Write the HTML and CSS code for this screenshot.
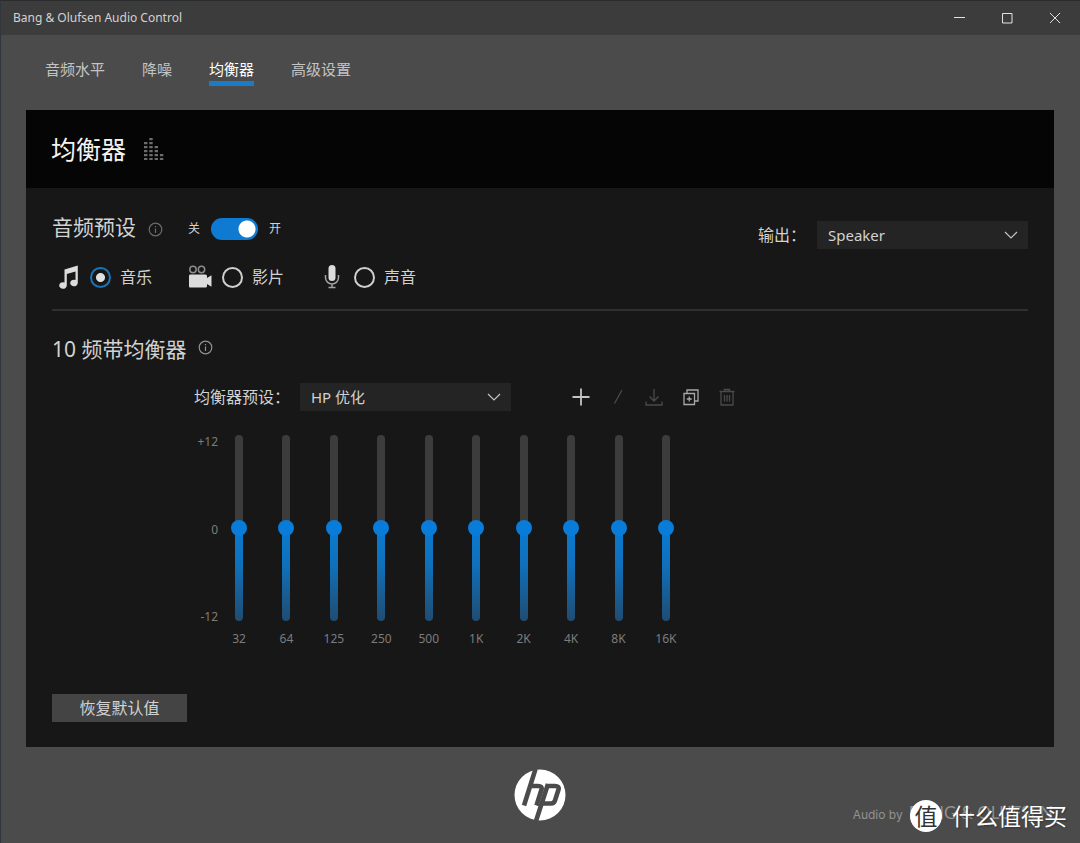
FILE: index.html
```html
<!DOCTYPE html>
<html lang="zh-CN">
<head>
<meta charset="utf-8">
<meta name="viewport" content="width=device-width, initial-scale=1">
<title>Bang &amp; Olufsen Audio Control</title>
<link rel="stylesheet" href="styles.css">
</head>
<body>
<div class="window">
  <header class="titlebar">
    <span class="titlebar-name">Bang &amp; Olufsen Audio Control</span>
    <div class="window-buttons">
      <button class="window-button" type="button" aria-label="最小化"><svg width="12" height="12" viewBox="0 0 12 12"><path d="M1 5.500h11"/></svg></button>
      <button class="window-button" type="button" aria-label="最大化"><svg width="12" height="12" viewBox="0 0 12 12"><path d="M1.500 1.500h9.500v9.500h-9.500z"/></svg></button>
      <button class="window-button" type="button" aria-label="关闭"><svg width="12" height="12" viewBox="0 0 12 12"><path d="M1 1l10 10M11 1L1 11"/></svg></button>
    </div>
  </header>

  <nav class="tabs">
    <a class="tab" href="#levels">音频水平</a>
    <a class="tab" href="#noise">降噪</a>
    <a class="tab tab-active" href="#equalizer" aria-current="page">均衡器</a>
    <a class="tab" href="#advanced">高级设置</a>
  </nav>

  <main class="panel" id="equalizer">
    <div class="panel-head">
      <h1 class="panel-title">均衡器</h1>
      <svg class="bars-icon" width="20" height="22" viewBox="0 0 20 22">
        <path d="M1.700 4V22M7 0V22M12.300 8V22M17.600 16V22" stroke-width="3.400" stroke-dasharray="2.200 1.800" fill="none" stroke="#6c6c6c"/>
      </svg>
    </div>

    <div class="panel-body">
      <section class="presets">
        <div class="preset-main">
          <div class="preset-head">
            <h2 class="section-title preset-title">音频预设</h2>
            <svg class="info-icon" width="15" height="15" viewBox="0 0 15 15"><circle cx="7.500" cy="7.500" r="6.300"/><path d="M7.500 6.500v4.500M7.500 4v1.300"/></svg>
            <label class="switch">
              <span>关</span>
              <input class="switch-input" type="checkbox" role="switch" aria-label="音频预设" checked>
              <span>开</span>
            </label>
          </div>
          <div class="radio-row" role="radiogroup" aria-label="音频预设">
            <label class="radio-item">
              <svg class="mode-icon" width="24" height="24" viewBox="0 0 24 24"><path d="M8.500 4.500L21.800 0.500v17.500a3.800 3.300 0 1 1-2.300-3V6.500L10.800 9v11.500a3.800 3.300 0 1 1-2.300-3z" fill="#dcdcdc"/></svg>
              <input class="radio" type="radio" name="preset" checked>
              <span>音乐</span>
            </label>
            <label class="radio-item">
              <svg class="mode-icon" width="24" height="24" viewBox="0 0 24 24"><g fill="none" stroke="#8c8c8c" stroke-width="1.500"><circle cx="5" cy="4.500" r="3.200"/><circle cx="13.500" cy="4.500" r="3.200"/></g><path d="M2 9.500h15.500q1.500 0 1.500 1.500v2l4-2.500h.5v11h-.5l-4-2.500v2q0 1.500-1.500 1.500H2q-1 0-1-1.500V11q0-1.500 1-1.500z" fill="#dcdcdc"/></svg>
              <input class="radio" type="radio" name="preset">
              <span>影片</span>
            </label>
            <label class="radio-item">
              <svg class="mode-icon" width="24" height="24" viewBox="0 0 24 24"><rect x="8.500" y="0" width="7" height="16" rx="3.500" fill="#dcdcdc"/><path d="M5.500 10v2.500a6.500 6.500 0 0 0 13 0V10M12 19v3.500M8.500 22.500h7" fill="none" stroke="#a2a2a2" stroke-width="1.500"/></svg>
              <input class="radio" type="radio" name="preset">
              <span>声音</span>
            </label>
          </div>
        </div>
        <div class="output">
          <label for="output-device">输出：</label>
          <span class="select-box">
            <select class="select" id="output-device"><option>Speaker</option></select>
            <svg class="chevron" width="14" height="8" viewBox="0 0 14 8"><path d="M1 1l6 6 6-6"/></svg>
          </span>
        </div>
      </section>

      <section class="bands">
        <div class="bands-head">
          <h2 class="section-title bands-title">10 频带均衡器</h2>
          <svg class="info-icon info-bright" width="15" height="15" viewBox="0 0 15 15"><circle cx="7.500" cy="7.500" r="6.300"/><path d="M7.500 6.500v4.500M7.500 4v1.300"/></svg>
        </div>
        <div class="equalizer">
          <div class="eq-toolbar">
            <label class="eq-label" for="eq-preset">均衡器预设：</label>
            <span class="select-box">
              <select class="select" id="eq-preset"><option>HP 优化</option></select>
              <svg class="chevron" width="14" height="8" viewBox="0 0 14 8"><path d="M1 1l6 6 6-6"/></svg>
            </span>
            <div class="tools">
              <button class="tool tool-add" type="button" aria-label="新建"><svg width="20" height="20" viewBox="0 0 20 20"><path d="M10 1.500v17M1.500 10h17"/></svg></button>
              <button class="tool tool-off" type="button" aria-label="编辑" disabled><svg width="20" height="20" viewBox="0 0 20 20"><path d="M6.500 16.500L14 3"/></svg></button>
              <button class="tool tool-off" type="button" aria-label="保存" disabled><svg width="20" height="20" viewBox="0 0 20 20"><path d="M10 2v12M5.500 9.500L10 14l4.500-4.500M2 14.500v3.500h16v-3.500"/></svg></button>
              <button class="tool" type="button" aria-label="复制"><svg width="20" height="20" viewBox="0 0 20 20"><path d="M3 6.500h10.500v11H3zM6 6.500V3h11v11h-3.500M8.250 9.500v5M5.750 12h5"/></svg></button>
              <button class="tool tool-off" type="button" aria-label="删除" disabled><svg width="20" height="20" viewBox="0 0 20 20"><path d="M2.500 4.500h15M7.500 4.500V2.500h5v2M4 4.500v13.500h12V4.500M7.500 8v6.500M10 8v6.500M12.500 8v6.500"/></svg></button>
            </div>
          </div>
          <div class="eq-grid">
            <div class="scale"><span>+12</span><span>0</span><span>-12</span></div>
            <div class="sliders">
              <label class="band"><input class="slider" type="range" min="-12" max="12" value="0"><span>32</span></label>
              <label class="band"><input class="slider" type="range" min="-12" max="12" value="0"><span>64</span></label>
              <label class="band"><input class="slider" type="range" min="-12" max="12" value="0"><span>125</span></label>
              <label class="band"><input class="slider" type="range" min="-12" max="12" value="0"><span>250</span></label>
              <label class="band"><input class="slider" type="range" min="-12" max="12" value="0"><span>500</span></label>
              <label class="band"><input class="slider" type="range" min="-12" max="12" value="0"><span>1K</span></label>
              <label class="band"><input class="slider" type="range" min="-12" max="12" value="0"><span>2K</span></label>
              <label class="band"><input class="slider" type="range" min="-12" max="12" value="0"><span>4K</span></label>
              <label class="band"><input class="slider" type="range" min="-12" max="12" value="0"><span>8K</span></label>
              <label class="band"><input class="slider" type="range" min="-12" max="12" value="0"><span>16K</span></label>
            </div>
          </div>
        </div>
      </section>

      <button class="reset" type="button">恢复默认值</button>
    </div>
  </main>

  <footer class="footer">
    <svg class="hp-logo" width="52" height="52" viewBox="0 0 52 52" role="img" aria-label="HP">
      <circle cx="26" cy="26" r="25.500" fill="#fff"/>
      <g fill="none" stroke="#4b4b4b" stroke-width="4.600">
        <path d="M21.500 0L10 36.500M16 17h8q4.500 0 3.500 3.500L22.500 36.500"/>
        <path d="M34 15L22 52M32 17h9q4.500 0 3.500 3.500L41 31.500q-1 3-4 3H27"/>
      </g>
    </svg>
    <div class="brand">
      <span class="brand-by">Audio by</span>
      <span class="brand-name">BANG &amp; OLUFSEN</span>
      <div class="watermark"><span class="watermark-badge">值</span><span>什么值得买</span></div>
    </div>
  </footer>
</div>
</body>
</html>
```

FILE: styles.css
```css
* {
  box-sizing: border-box;
}

body {
  margin: 0;
  background: #4b4b4b;
  color: #d2d2d2;
  font-family: "Noto Sans", "Noto Sans CJK SC", sans-serif;
  font-size: 16px;
  font-weight: 400;
  line-height: 24px;
}

button,
select,
input {
  margin: 0;
  font: inherit;
  color: inherit;
}

svg {
  display: block;
  flex: none;
}

.window {
  display: flex;
  flex-direction: column;
  min-height: 100vh;
  border-top: 1px solid #292b2d;
  border-left: 1px solid #30363c;
}

/* Title bar */
.titlebar {
  display: flex;
  justify-content: space-between;
  align-items: center;
  height: 34px;
  padding: 0 1px 0 12px;
  background: #3c3c3c;
}

.titlebar-name {
  font-size: 12px;
  color: #d2d2d2;
}

.window-buttons {
  display: flex;
}

.window-button {
  display: grid;
  place-items: center;
  width: 48px;
  height: 32px;
  padding: 0;
  border: 0;
  background: none;
}

.window-button svg {
  fill: none;
  stroke: #e2e2e2;
  stroke-width: 1;
}

/* Tabs */
.tabs {
  display: flex;
  gap: 37px;
  padding: 23px 44px 24px;
}

.tab {
  height: 28px;
  font-size: 15px;
  line-height: 22px;
  color: #c4c4c4;
  text-decoration: none;
}

.tab-active {
  border-bottom: 5px solid #1a7cc7;
  color: #ffffff;
}

/* Panel */
.panel {
  flex: 1;
  display: flex;
  flex-direction: column;
  margin: 0 26px 0 25px;
  background: #171717;
}

.panel-head {
  display: flex;
  align-items: center;
  gap: 18px;
  height: 78px;
  padding: 0 25px;
  background: #050505;
}

.panel-title {
  margin: 0;
  font-size: 25px;
  font-weight: 400;
  line-height: 32px;
  color: #f4f4f4;
}

.panel-body {
  flex: 1;
  display: flex;
  flex-direction: column;
  align-items: stretch;
  padding: 25px 26px;
}

.section-title {
  margin: 0;
  font-size: 21px;
  font-weight: 400;
  line-height: 28px;
}

.preset-title {
  padding-bottom: 4px;
}

.bands-title {
  padding-top: 4px;
}

.info-icon {
  fill: none;
  stroke: #6c6c6c;
  stroke-width: 1.200;
}

.info-bright {
  stroke: #929292;
}

/* Audio presets */
.presets {
  display: flex;
  justify-content: space-between;
  align-items: flex-start;
  padding-bottom: 20px;
  border-bottom: 2px solid #303030;
}

.preset-main {
  display: flex;
  flex-direction: column;
  gap: 20px;
}

.preset-head,
.bands-head {
  display: flex;
  align-items: center;
  gap: 12px;
}

.switch {
  display: flex;
  align-items: center;
  gap: 11px;
  margin-left: 13px;
  font-size: 12px;
}

.switch-input {
  appearance: none;
  width: 47px;
  height: 22px;
  border-radius: 11px;
  background: radial-gradient(circle at 36px 11px, #ffffff 8px, #0f7ad2 9px);
}

.radio-row {
  display: flex;
  gap: 36px;
  padding-left: 4px;
}

.radio-item {
  display: flex;
  align-items: center;
}

.mode-icon {
  margin-right: 10px;
}

.radio {
  appearance: none;
  width: 21px;
  height: 21px;
  margin-right: 9px;
  border: 2px solid #cfcfcf;
  border-radius: 50%;
}

.radio:checked {
  border-color: #1a74b8;
  background: radial-gradient(circle, #e0e0e0 4px, transparent 5px);
}

.output {
  display: flex;
  align-items: center;
  gap: 11px;
  padding-top: 8px;
}

.select-box {
  position: relative;
  display: block;
  width: 211px;
}

.select {
  appearance: none;
  display: block;
  width: 100%;
  height: 28px;
  padding: 0 32px 0 11px;
  border: 0;
  border-radius: 0;
  background: #242424;
  font-size: 15px;
}

.chevron {
  position: absolute;
  top: 10px;
  right: 10px;
  fill: none;
  stroke: #c4c4c4;
  stroke-width: 1.200;
  pointer-events: none;
}

/* Ten band equalizer */
.bands {
  padding-top: 20px;
}

.equalizer {
  padding: 20px 0 0 142px;
}

.eq-toolbar {
  display: flex;
  align-items: center;
}

.eq-label {
  width: 106px;
  white-space: nowrap;
}

.tools {
  display: flex;
  justify-content: space-between;
  width: 170px;
  margin-left: 58px;
}

.tool {
  display: grid;
  place-items: center;
  width: 24px;
  height: 24px;
  padding: 0;
  border: 0;
  background: none;
}

.tool svg {
  fill: none;
  stroke: #a8a8a8;
  stroke-width: 1.300;
}

.tool-add svg {
  stroke: #c4c4c4;
  stroke-width: 1.800;
}

.tool-off svg {
  stroke: #4a4a4a;
}

.eq-grid {
  display: flex;
  gap: 5px;
  padding-top: 24px;
  font-size: 12px;
  line-height: 16px;
  color: #7c7c7c;
}

.scale {
  display: flex;
  flex-direction: column;
  justify-content: space-between;
  width: 24px;
  height: 189px;
  line-height: 14px;
  text-align: right;
}

.sliders {
  display: flex;
  justify-content: space-between;
  width: 459px;
}

.band {
  display: flex;
  flex-direction: column;
  align-items: center;
  gap: 10px;
  width: 32px;
}

.slider {
  appearance: none;
  writing-mode: vertical-lr;
  direction: rtl;
  width: 16px;
  height: 186px;
  background: none;
}

.slider::-webkit-slider-runnable-track {
  width: 8px;
  height: 186px;
  border-radius: 4px;
  background: linear-gradient(#3c3c3c 50%, #0a7ad0 50%, #0f70bb 70%, #204c70);
}

.slider::-webkit-slider-thumb {
  appearance: none;
  width: 16px;
  height: 16px;
  margin-left: -4px;
  border-radius: 50%;
  background: #087cd8;
}

.reset {
  align-self: flex-start;
  width: 135px;
  height: 28px;
  margin-top: auto;
  padding: 0;
  border: 0;
  background: #444444;
  line-height: 28px;
}

/* Footer */
.footer {
  display: grid;
  grid-template-columns: 1fr auto 1fr;
  align-items: center;
  height: 96px;
  padding: 0 27px 0 25px;
}

.hp-logo {
  grid-column: 2;
}

.brand {
  position: relative;
  display: flex;
  justify-content: flex-end;
  align-items: baseline;
  gap: 6px;
  padding-top: 38px;
  color: #929292;
  white-space: nowrap;
}

.brand-by {
  font-family: Inter, sans-serif;
  font-size: 12px;
}

.brand-name {
  font-family: Lato, sans-serif;
  font-size: 17px;
}

.watermark {
  position: absolute;
  right: -14px;
  bottom: -5px;
  display: flex;
  align-items: center;
  gap: 10px;
  color: #ffffff;
  font-size: 23px;
  line-height: 32px;
  text-shadow: 1px 1px 2px #333333;
}

.watermark-badge {
  width: 32px;
  height: 32px;
  border-radius: 50%;
  background: #ffffff;
  color: #333333;
  text-align: center;
  text-shadow: none;
}
```
